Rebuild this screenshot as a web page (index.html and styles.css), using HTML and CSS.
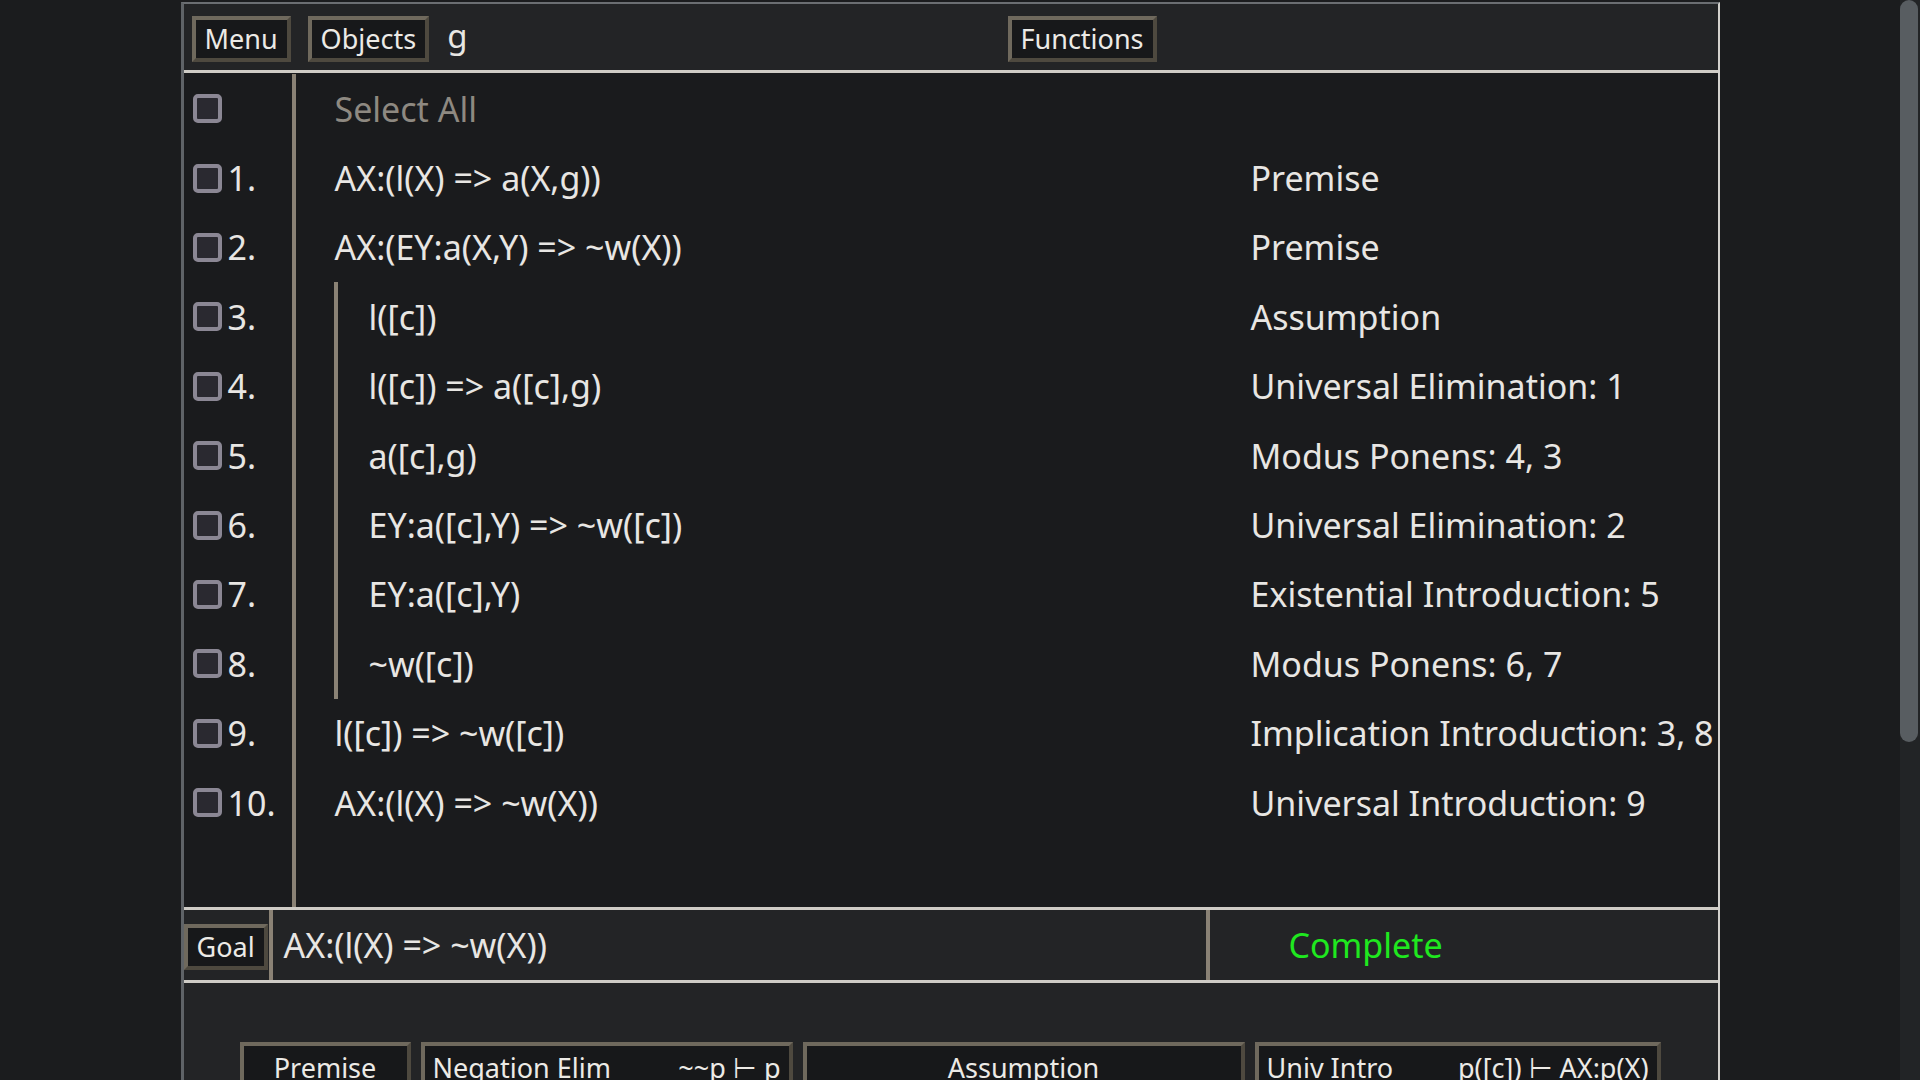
FILE: index.html
```html
<!DOCTYPE html>
<html lang="en">
<head>
<meta charset="utf-8">
<title>Proof</title>
<link rel="stylesheet" href="styles.css">
</head>
<body>
<div class="app">
<div class="viewport">
<div class="panel">
  <header class="toolbar">
    <div class="toolbar-left">
      <button class="btn">Menu</button>
      <button class="btn">Objects</button>
      <span class="objects">g</span>
    </div>
    <button class="btn">Functions</button>
  </header>

  <section class="proof">
    <div class="gutter">
      <div class="gut-row"><span class="check"></span></div>
      <div class="gut-row"><span class="check"></span><span class="num">1.</span></div>
      <div class="gut-row"><span class="check"></span><span class="num">2.</span></div>
      <div class="gut-row"><span class="check"></span><span class="num">3.</span></div>
      <div class="gut-row"><span class="check"></span><span class="num">4.</span></div>
      <div class="gut-row"><span class="check"></span><span class="num">5.</span></div>
      <div class="gut-row"><span class="check"></span><span class="num">6.</span></div>
      <div class="gut-row"><span class="check"></span><span class="num">7.</span></div>
      <div class="gut-row"><span class="check"></span><span class="num">8.</span></div>
      <div class="gut-row"><span class="check"></span><span class="num">9.</span></div>
      <div class="gut-row"><span class="check"></span><span class="num">10.</span></div>
    </div>
    <div class="lines">
      <div class="line"><span class="select-all">Select All</span></div>
      <div class="line"><span>AX:(l(X) =&gt; a(X,g))</span><span>Premise</span></div>
      <div class="line"><span>AX:(EY:a(X,Y) =&gt; ~w(X))</span><span>Premise</span></div>
      <div class="sub">
        <div class="line"><span>l([c])</span><span>Assumption</span></div>
        <div class="line"><span>l([c]) =&gt; a([c],g)</span><span>Universal Elimination: 1</span></div>
        <div class="line"><span>a([c],g)</span><span>Modus Ponens: 4, 3</span></div>
        <div class="line"><span>EY:a([c],Y) =&gt; ~w([c])</span><span>Universal Elimination: 2</span></div>
        <div class="line"><span>EY:a([c],Y)</span><span>Existential Introduction: 5</span></div>
        <div class="line"><span>~w([c])</span><span>Modus Ponens: 6, 7</span></div>
      </div>
      <div class="line"><span>l([c]) =&gt; ~w([c])</span><span>Implication Introduction: 3, 8</span></div>
      <div class="line"><span>AX:(l(X) =&gt; ~w(X))</span><span>Universal Introduction: 9</span></div>
    </div>
  </section>

  <section class="goal">
    <button class="btn">Goal</button>
    <div class="goal-formula">AX:(l(X) =&gt; ~w(X))</div>
    <div class="goal-status">Complete</div>
  </section>

  <section class="rules">
    <div class="rule-row">
      <button class="btn rule w1"><span class="rule-name center">Premise</span></button>
      <button class="btn rule w2"><span class="rule-name">Negation Elim</span><span class="rule-form">~~p ⊢ p</span></button>
      <button class="btn rule w3 stack"><span class="rule-name center">Assumption</span><span class="rule-hint">p ⊢ ... ⊢ q</span></button>
      <button class="btn rule w4"><span class="rule-name">Univ Intro</span><span class="rule-form">p([c]) ⊢ AX:p(X)</span></button>
    </div>
    <div class="rule-row">
      <button class="btn rule w1"><span class="rule-name center">Reiterate</span></button>
      <button class="btn rule w2"><span class="rule-name">Conj Intro</span><span class="rule-form">p, q ⊢ p&amp;q</span></button>
      <button class="btn rule w3"><span class="rule-name">Implication Intro</span><span class="rule-form">p ... q ⊢ p =&gt; q</span></button>
      <button class="btn rule w4"><span class="rule-name">Univ Elim</span><span class="rule-form">AX:p(X) ⊢ p([c])</span></button>
    </div>
  </section>
</div>
</div>
<div class="scrollbar" aria-hidden="true"><div class="thumb"></div></div>
</div>
</body>
</html>
```
FILE: styles.css
```css
html, body {
  height: 100%;
}
body {
  margin: 0;
  overflow: hidden;
  background: #1b1c1e;
  color: #e8e6e3;
  font-family: "Noto Sans", "Open Sans", sans-serif;
}
.app {
  display: flex;
  height: 100vh;
}
.viewport {
  flex: 1;
  min-width: 0;
  overflow: hidden;
  background: #1b1c1e;
}
.scrollbar {
  flex: none;
  width: 20px;
  background: #222426;
}
.thumb {
  width: 18px;
  height: 742px;
  border-radius: 9px;
  background: #585d61;
}
button {
  font-family: inherit;
}
.panel {
  box-sizing: border-box;
  width: 1539px;
  margin: 2px auto 0;
  border-top: 2px solid #6b6e72;
  border-left: 3px solid #5f6367;
  border-right: 2px solid #d3d1cd;
  background: #232426;
}
.btn {
  box-sizing: border-box;
  height: 46px;
  padding: 0 9px;
  background: #17181a;
  color: #eceae6;
  font-size: 27px;
  line-height: 38px;
  border: 4px solid;
  border-color: #6f695d #4e493f #4e493f #6f695d;
  white-space: nowrap;
}

/* toolbar */
.toolbar {
  display: grid;
  grid-template-columns: 816px auto;
  justify-items: start;
  height: 69px;
  box-sizing: border-box;
  padding: 12px 0 0 8px;
  background: #232426;
  border-bottom: 3px solid #cfccc6;
}
.toolbar-left {
  display: flex;
  align-items: flex-start;
  gap: 17px;
}
.objects {
  font-size: 33px;
  line-height: 40px;
  margin-left: 1px;
}

/* proof */
.proof {
  display: flex;
  height: 837px;
  box-sizing: border-box;
  padding-top: 1px;
  background: #1a1b1d;
  border-bottom: 3px solid #cfccc6;
  overflow: hidden;
}
.gutter {
  flex: none;
  width: 108px;
  border-right: 4px solid #8a8275;
}
.gut-row {
  height: 69.4px;
  display: flex;
  align-items: center;
  padding-left: 9px;
  gap: 6px;
}
.check {
  box-sizing: border-box;
  width: 29px;
  height: 29px;
  border: 4px solid #8b8794;
  border-radius: 5px;
  background: #2a2930;
}
.num {
  font-size: 34px;
  line-height: 1;
}
.lines {
  flex: 1;
  min-width: 0;
}
.line {
  display: grid;
  grid-template-columns: 916px auto;
  height: 69.4px;
  align-items: center;
  padding-left: 39px;
  font-size: 34px;
  line-height: 46px;
  white-space: nowrap;
}
.select-all {
  color: #8e8981;
}
.sub {
  margin-left: 38px;
  border-left: 4px solid #8a8275;
}
.sub .line {
  padding-left: 31px;
  grid-template-columns: 882px auto;
}

/* goal */
.goal {
  display: flex;
  height: 70px;
  box-sizing: content-box;
  background: #232426;
  border-bottom: 3px solid #cfccc6;
}
.goal .btn {
  margin-top: 14px;
  width: 84px;
  margin-right: 1px;
}
.goal-formula {
  width: 941px;
  box-sizing: border-box;
  border-left: 4px solid #8a8275;
  border-right: 4px solid #8a8275;
  padding-left: 11px;
  font-size: 34px;
  line-height: 70px;
  white-space: nowrap;
}
.goal-status {
  padding-left: 79px;
  font-size: 34px;
  line-height: 70px;
  color: #1fe81f;
}

/* rules */
.rules {
  padding: 59px 0 140px 56px;
  display: flex;
  flex-direction: column;
  gap: 14px;
  background: #232426;
}
.rule-row {
  display: flex;
  gap: 10px;
}
.rule {
  height: 90px;
  display: flex;
  justify-content: space-between;
  align-items: flex-start;
  padding: 3px 8px 0 8px;
  border-color: #6f695d #4e493f #4e493f #6f695d;
}
.rule.stack {
  flex-direction: column;
  align-items: center;
  justify-content: flex-start;
}
.rule-name.center {
  margin: 0 auto;
}
.rule-form {
  font-size: 27px;
}
.rule-hint {
  font-size: 18px;
  line-height: 22px;
  color: #d0cec9;
}
.w1 { width: 171px; }
.w2 { width: 372px; }
.w3 { width: 442px; }
.w4 { width: 406px; }
```
